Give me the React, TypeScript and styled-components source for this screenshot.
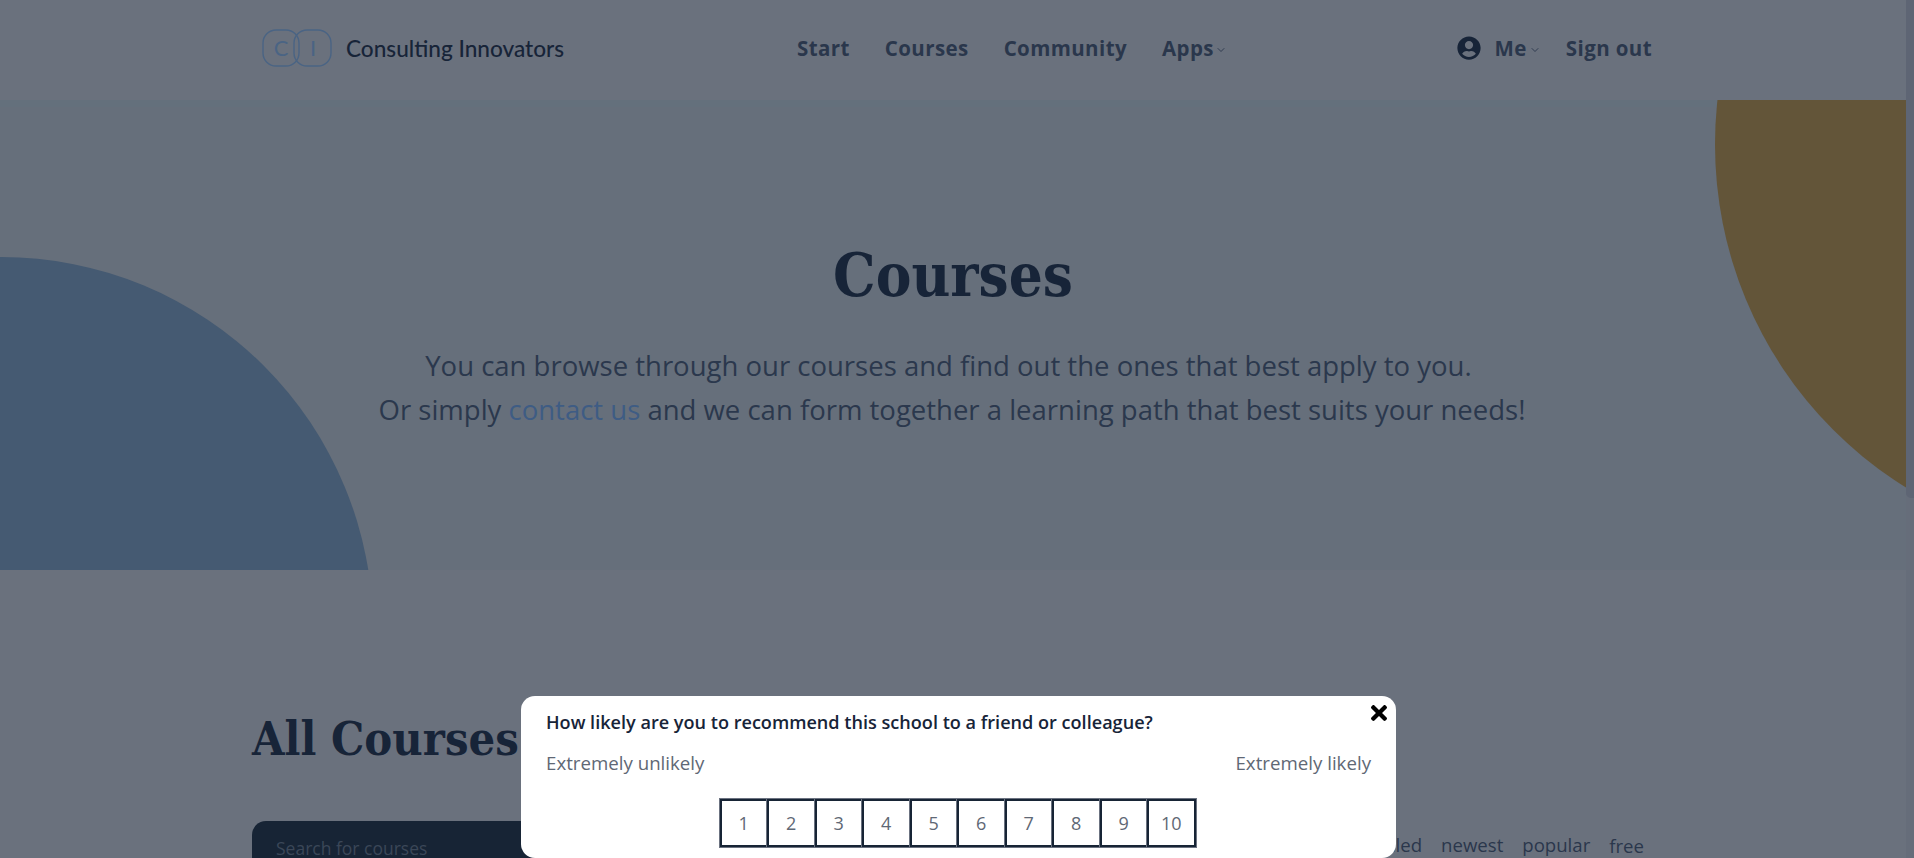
import React from 'react';
import styled, { createGlobalStyle } from 'styled-components';
import { ChevronDown } from 'lucide-react';
import { FaTimes, FaUserCircle } from 'react-icons/fa';

const colors = {
  page: '#6a717d',
  hero: '#666f7b',
  ink: '#172438',
  navText: '#2a374c',
  body: '#2b384d',
  link: '#3e5c84',
  blue: '#455a72',
  gold: '#635539',
  dark: '#172435',
  muted: '#5f6875',
  logo: '#4a6484',
};

const GlobalStyle = createGlobalStyle`
  html, body {
    margin: 0;
    height: 100%;
    overflow: hidden;
    background: ${colors.page};
    font-family: "Open Sans", "Liberation Sans", sans-serif;
  }
  * {
    box-sizing: border-box;
  }
`;

const Page = styled.div`
  width: 1906px;
  height: 858px;
  overflow: hidden;
`;

const Header = styled.header`
  height: 100px;
  background: ${colors.page};
`;

const Container = styled.div`
  width: 1400px;
  margin: 0 auto;
`;

const HeaderRow = styled(Container)`
  height: 100%;
  display: flex;
  align-items: center;
  padding: 0 1px 4px 9px;
`;

const Brand = styled.a`
  display: flex;
  align-items: center;
  gap: 14px;
  width: 400px;
  color: ${colors.ink};
  font-family: Lato, sans-serif;
  font-size: 22.6px;
  font-weight: 500;
`;

const NavLinks = styled.nav`
  display: flex;
  align-items: center;
  gap: 35px;
  margin-left: 135px;
`;

const NavLink = styled.a`
  display: flex;
  align-items: center;
  gap: 1px;
  color: ${colors.navText};
  font-size: 20.5px;
  font-weight: 700;
  letter-spacing: 0.4px;
`;

const UserLinks = styled.div`
  display: flex;
  align-items: center;
  gap: 25px;
  margin-left: auto;
`;

const UserMenu = styled(NavLink)`
  gap: 2px;
`;

const Avatar = styled(FaUserCircle)`
  width: 24px;
  height: 24px;
  margin-right: 12px;
  color: ${colors.ink};
`;

const Hero = styled.section`
  position: relative;
  height: 470px;
  overflow: hidden;
  background: ${colors.hero};
  box-shadow: inset 0 7px 0 #64707c;
  text-align: center;
  padding-top: 135px;
`;

const BlueCircle = styled.div`
  position: absolute;
  left: -371px;
  top: 157px;
  width: 744px;
  height: 744px;
  border-radius: 50%;
  background: ${colors.blue};
`;

const GoldCircle = styled.div`
  position: absolute;
  left: 1715px;
  top: -359px;
  width: 807px;
  height: 807px;
  border-radius: 50%;
  background: ${colors.gold};
`;

const HeroTitle = styled.h1`
  position: relative;
  margin: 0;
  color: ${colors.ink};
  font-family: "DejaVu Serif Condensed", "Liberation Serif", serif;
  font-size: 59.5px;
  font-weight: 700;
  line-height: 80px;
`;

const HeroText = styled.p`
  position: relative;
  margin: 29px 0 0;
  padding-right: 2px;
  color: ${colors.body};
  font-size: 27.5px;
  font-weight: 400;
  line-height: 44px;
`;

const HeroLink = styled.a`
  color: ${colors.link};
`;

const CoursesSection = styled(Container)`
  padding-top: 137px;
`;

const SectionTitle = styled.h2`
  margin: 0 0 0 -1px;
  color: ${colors.ink};
  font-family: "DejaVu Serif Condensed", "Liberation Serif", serif;
  font-size: 46.6px;
  font-weight: 700;
  line-height: 64px;
`;

const FilterRow = styled.div`
  display: flex;
  justify-content: space-between;
  margin: 50px 0 0 -1px;
`;

const SearchBox = styled.div`
  width: 720px;
  height: 60px;
  padding: 15px 24px;
  border-radius: 14px;
  background: ${colors.dark};
  color: #3b4758;
  font-size: 17.5px;
  font-weight: 400;
`;

const SortLinks = styled.div`
  display: flex;
  gap: 19px;
  padding: 11px 9px 0 0;
  color: ${colors.navText};
  font-size: 18.6px;
  font-weight: 400;
`;

const SortLink = styled.a<{ $low?: boolean }>`
  margin-top: ${props => (props.$low ? '1px' : '0')};
`;

const Survey = styled.div`
  position: fixed;
  left: 521px;
  bottom: 0;
  width: 875px;
  height: 162px;
  padding: 14px 25px 0;
  border-radius: 14px;
  background: #fff;
`;

const CloseButton = styled(FaTimes)`
  position: absolute;
  top: 5px;
  right: 9px;
  width: 16px;
  height: 24px;
  color: #000;
`;

const Question = styled.div`
  color: ${colors.ink};
  font-size: 18.1px;
  font-weight: 600;
  line-height: 25px;
`;

const ScaleLabels = styled.div`
  display: flex;
  justify-content: space-between;
  margin-top: 15px;
  color: ${colors.muted};
  font-size: 18.7px;
  font-weight: 400;
  line-height: 25px;
`;

const ScaleRow = styled.div`
  display: flex;
  justify-content: center;
  margin-top: 24px;
  margin-left: -3px;
`;

const ScaleCell = styled.button`
  width: 48.5px;
  height: 48px;
  margin-right: -1px;
  padding: 0;
  border: 2px solid ${colors.dark};
  box-shadow: 0 0 0 1px #6b7280;
  background: #fff;
  color: ${colors.muted};
  font-family: inherit;
  font-size: 18px;
  font-weight: 400;
`;

const ScrollTrack = styled.div`
  position: fixed;
  top: 0;
  right: 0;
  width: 8px;
  height: 100%;
  background: #666d7a;
`;

const ScrollThumb = styled.div`
  width: 8px;
  height: 498px;
  border-radius: 0 0 0 5px;
  background: #5e6574;
`;

const Logo = () => (
  <svg width="70" height="38" viewBox="0 0 70 38" fill="none">
    <rect x="1" y="1" width="36" height="36" rx="13" stroke={colors.logo} strokeWidth="1.4" />
    <rect x="32" y="1" width="37" height="36" rx="13" stroke={colors.logo} strokeWidth="1.4" />
    <text x="19" y="27" fontFamily="Lato, sans-serif" fontSize="22" fontWeight="400" fill={colors.logo} textAnchor="middle">C</text>
    <text x="51" y="27" fontFamily="Lato, sans-serif" fontSize="22" fontWeight="400" fill={colors.logo} textAnchor="middle">I</text>
  </svg>
);

const Caret = styled(ChevronDown).attrs({ size: 12, strokeWidth: 1.8 })`
  margin-top: 3px;
  color: ${colors.navText};
`;

export default function App() {
  return (
    <Page>
      <GlobalStyle />
      <Header>
        <HeaderRow>
          <Brand>
            <Logo />
            Consulting Innovators
          </Brand>
          <NavLinks>
            <NavLink>Start</NavLink>
            <NavLink>Courses</NavLink>
            <NavLink>Community</NavLink>
            <NavLink>
              Apps
              <Caret />
            </NavLink>
          </NavLinks>
          <UserLinks>
            <UserMenu>
              <Avatar />
              Me
              <Caret />
            </UserMenu>
            <NavLink>Sign out</NavLink>
          </UserLinks>
        </HeaderRow>
      </Header>

      <Hero>
        <BlueCircle />
        <GoldCircle />
        <HeroTitle>Courses</HeroTitle>
        <HeroText>
          You can browse through our courses and find out the ones that best apply to you.&nbsp;
          <br />
          Or simply <HeroLink>contact us</HeroLink> and we can form together a learning path that best suits your needs!
        </HeroText>
      </Hero>

      <CoursesSection>
        <SectionTitle>All Courses</SectionTitle>
        <FilterRow>
          <SearchBox>Search for courses</SearchBox>
          <SortLinks>
            <SortLink>enrolled</SortLink>
            <SortLink>newest</SortLink>
            <SortLink>popular</SortLink>
            <SortLink $low>free</SortLink>
          </SortLinks>
        </FilterRow>
      </CoursesSection>

      <Survey>
        <CloseButton />
        <Question>How likely are you to recommend this school to a friend or colleague?</Question>
        <ScaleLabels>
          <span>Extremely unlikely</span>
          <span>Extremely likely</span>
        </ScaleLabels>
        <ScaleRow>
          {[1, 2, 3, 4, 5, 6, 7, 8, 9, 10].map(n => (
            <ScaleCell key={n}>{n}</ScaleCell>
          ))}
        </ScaleRow>
      </Survey>

      <ScrollTrack>
        <ScrollThumb />
      </ScrollTrack>
    </Page>
  );
}
